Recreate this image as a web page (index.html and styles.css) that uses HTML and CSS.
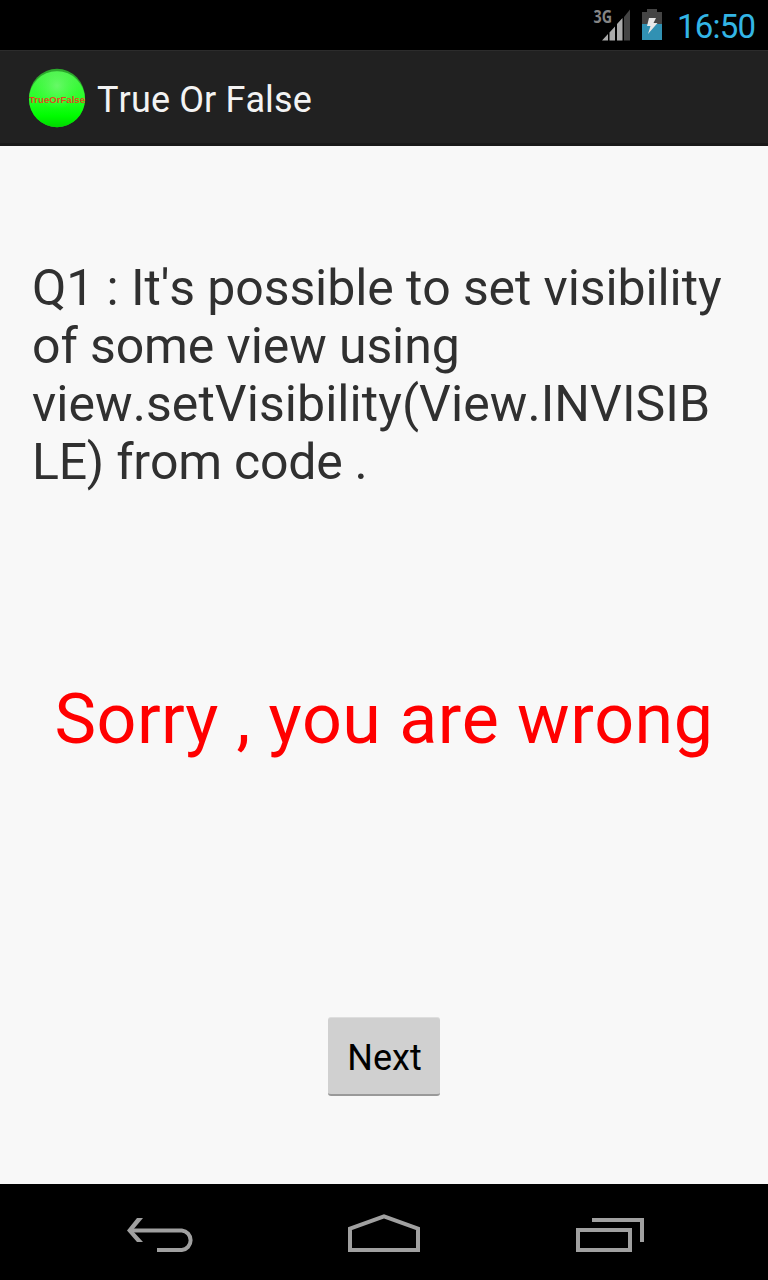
FILE: index.html
```
<!DOCTYPE html>
<html lang="en">
<head>
<meta charset="utf-8">
<title>True Or False</title>
<link rel="stylesheet" href="styles.css">
</head>
<body>
<div class="screen">
  <header class="status-bar">
    <svg class="signal" width="40" height="36" viewBox="0 0 40 36">
      <path fill="#ababab" d="M10 33.500L16 27V33.500zM17.500 25.500L23 19.500V33.500H17.500zM25 17L30.500 11V33.500H25z"/>
      <path fill="#444" d="M32 10L38 2.500V33.500H32z"/>
      <text class="signal-label" x="1.500" y="15.500" textLength="18.500" lengthAdjust="spacingAndGlyphs">3G</text>
    </svg>
    <svg class="battery" width="20" height="32" viewBox="0 0 20 32">
      <path fill="#444" d="M5 0H15V3H20V16H0V3H5z"/>
      <path fill="#3191b3" d="M0 15H20V31H0z"/>
      <path fill="#e8e8e8" d="M7 9H14L11.500 14H15.500L6 25L8.500 17H5z"/>
    </svg>
    <span class="clock">16:50</span>
  </header>
  <div class="action-bar">
    <svg class="app-icon" width="60" height="60" viewBox="0 0 60 60">
      <defs>
        <linearGradient id="ball" x1="0" y1="0" x2="0" y2="1">
          <stop offset="0" stop-color="#4cf04c"/><stop offset=".45" stop-color="#2cff2c"/>
          <stop offset=".8" stop-color="#00fc00"/><stop offset="1" stop-color="#00d800"/>
        </linearGradient>
        <radialGradient id="glow" cx=".5" cy=".26" r=".42">
          <stop offset="0" stop-color="#70f870" stop-opacity=".85"/><stop offset="1" stop-color="#50ff50" stop-opacity="0"/>
        </radialGradient>
      </defs>
      <ellipse cx="30" cy="31" rx="28" ry="29.300" fill="#2ca82c"/>
      <ellipse cx="30" cy="32.200" rx="28" ry="28" fill="url(#ball)"/>
      <ellipse cx="30" cy="32.200" rx="28" ry="28" fill="url(#glow)"/>
      <text class="icon-label" x="2" y="35.500" textLength="56" lengthAdjust="spacingAndGlyphs">TrueOrFalse</text>
    </svg>
    <h1 class="title">True Or False</h1>
  </div>
  <main class="content">
    <p class="question"><span class="line">Q1 : It's possible to set visibility</span><span class="line">of some view using</span><span class="line wide">view.setVisibility(View.INVISIB</span><span class="line tight">LE) from code .</span></p>
    <p class="verdict">Sorry , you are wrong</p>
    <button class="next">Next</button>
  </main>
  <nav class="nav-bar">
    <svg width="68" height="36" viewBox="0 0 68 36"><path d="M5 14.500H55A9.800 9.800 0 0 1 55 34H30.200" transform="translate(.8 0)" fill="none" stroke="#a0a0a0" stroke-width="4"/><path d="M11 2H17L6.500 14.500L17 26H11L1 14.500z" fill="#a0a0a0"/></svg>
    <svg width="72" height="38" viewBox="0 0 72 38"><path d="M2 36V14.700L36 2.300L70 14.700V36z" fill="none" stroke="#a0a0a0" stroke-width="4"/></svg>
    <svg width="68" height="34" viewBox="0 0 68 34"><path d="M2 12H54V32H2zM16 2H66V24" fill="none" stroke="#a0a0a0" stroke-width="4"/></svg>
  </nav>
</div>
</body>
</html>
```
FILE: styles.css
```
* { box-sizing: border-box; margin: 0; padding: 0; }
body { background: #f8f8f8; font-family: Roboto, sans-serif; font-weight: 400; font-kerning: none; }
.screen { width: 768px; height: 1280px; display: flex; flex-direction: column; overflow: hidden; }
svg { display: block; flex: none; overflow: visible; }
.status-bar { height: 50px; background: #000; display: flex; align-items: flex-start; padding: 7px 10px 0 592px; }
.signal-label { font: 700 17px "Open Sans", sans-serif; fill: #858585; }
.battery { margin: 2px 0 0 10px; }
.clock { margin: 1px 0 0 15px; font-size: 33px; line-height: 38px; color: #33b5e5; letter-spacing: -.8px; white-space: nowrap; }
.action-bar { height: 96px; background: #212121; border-top: 1px solid #2c2c2c; border-bottom: 3px solid #191919; display: flex; align-items: flex-start; padding: 16px 27px 0; }
.icon-label { font: 700 9px "Liberation Sans", sans-serif; fill: #e04a20; }
.title { margin: 12px 0 0 10px; font-size: 36px; line-height: 42px; font-weight: 400; color: #f3f3f3; letter-spacing: .12px; white-space: nowrap; }
.content { height: 1038px; background: #f8f8f8; display: flex; flex-direction: column; align-items: center; padding-top: 113px; }
.question { width: 704px; font-size: 50px; line-height: 58px; color: #303030; white-space: nowrap; letter-spacing: -.1px; }
.line { display: block; }
.wide { letter-spacing: .06px; }
.tight { letter-spacing: -.25px; }
.verdict { margin-top: 187px; font-size: 70px; line-height: 82px; color: #f00; white-space: nowrap; letter-spacing: .42px; }
.next { margin-top: 257px; width: 112px; height: 79px; border: 0; border-top: 1px solid #dedede; border-bottom: 2px solid #999; border-radius: 3px; background: #d0d0d0; color: #000; font: 400 36px/42px Roboto, sans-serif; padding: 3px 0 0 1px; }
.nav-bar { height: 96px; background: #000; display: flex; align-items: flex-start; padding: 32px 124px 0 126px; justify-content: space-between; }
.nav-bar svg:nth-child(2) { margin: -2px 1px 0 -1px; }
.nav-bar svg:nth-child(3) { margin-top: 2px; }
```
